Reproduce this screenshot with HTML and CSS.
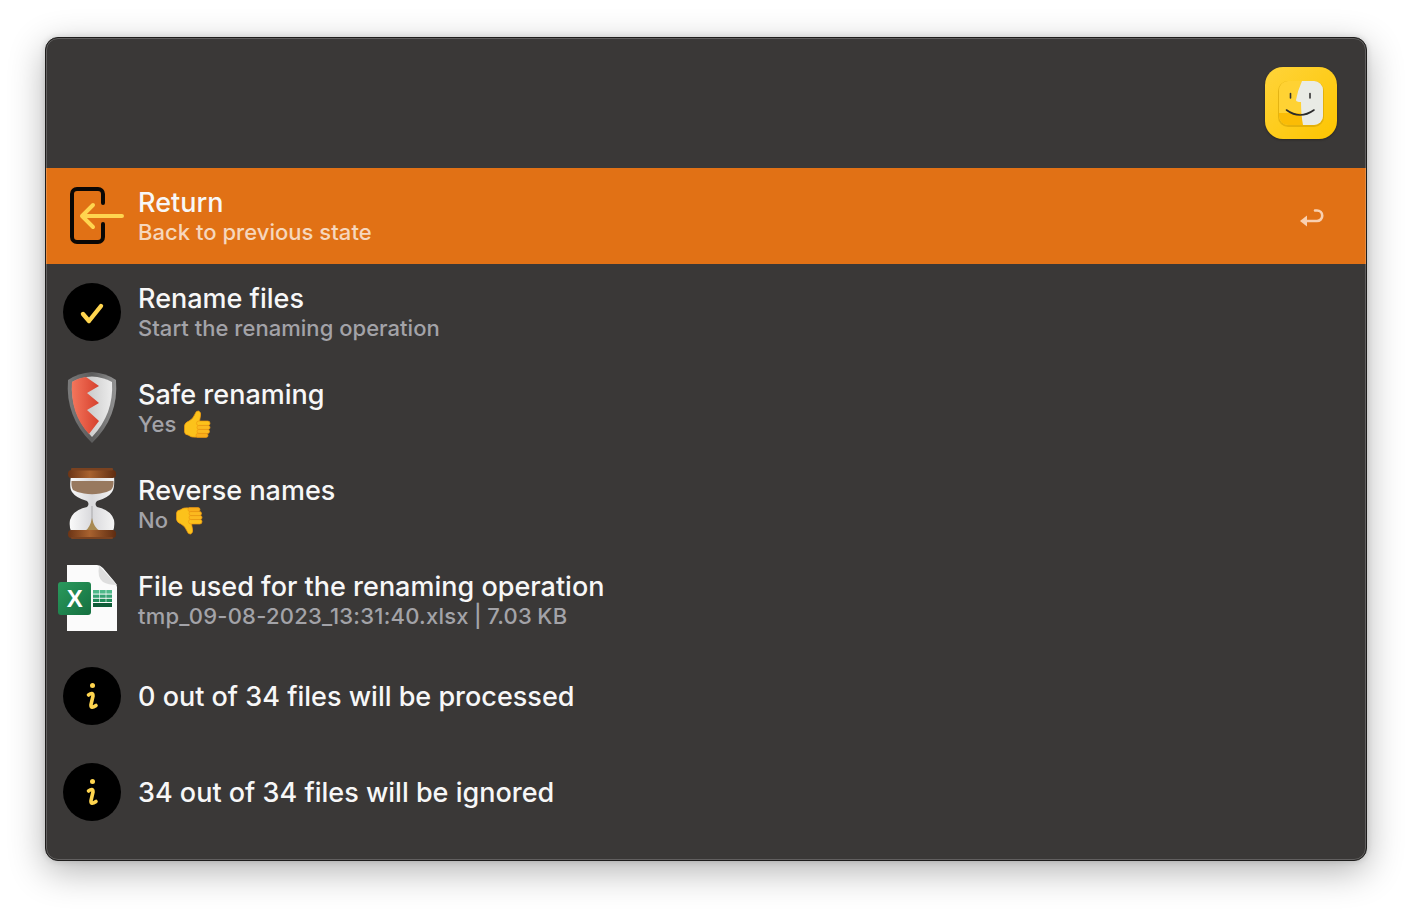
FILE: index.html
```html
<!DOCTYPE html>
<html lang="en">
<head>
  <meta charset="UTF-8" />
  <title>Rename files</title>
  <link rel="stylesheet" href="styles.css">
</head>
<body>
  <svg class="defs" width="0" height="0">
    <defs>
      <symbol id="info" viewBox="0 0 72 72">
        <circle cx="36" cy="36" r="29" fill="#000"/>
        <circle cx="36.5" cy="25.5" r="2.5" fill="#ffd54f"/>
        <path d="M32.5 35 Q37 31.5 37 36 L35 44.5 Q34.5 49.5 40 45.5" fill="none" stroke="#ffd54f" stroke-width="3.6" stroke-linecap="round"/>
      </symbol>
      <symbol id="thumb" viewBox="0 0 28 28">
        <path d="M1.5 15.5 Q2 12.5 6 11 Q10 9 12 4 Q13 0.5 15.5 1 Q18.5 2 17.5 6 L16.5 11 L15 27 Q8 28 5 25 Q2 25 1.5 22 Z" fill="#fcc21b" stroke="#ef9a10" stroke-width="0.7"/>
        <rect x="13.5" y="11" width="13.5" height="4.6" rx="2.3" fill="#fcc21b" stroke="#ef9a10" stroke-width="0.7"/>
        <rect x="14" y="15.4" width="13" height="4.2" rx="2.1" fill="#fbb91f" stroke="#ef9a10" stroke-width="0.7"/>
        <rect x="14" y="19.4" width="12.5" height="4.2" rx="2.1" fill="#fbb91f" stroke="#ef9a10" stroke-width="0.7"/>
        <rect x="13" y="23.4" width="12" height="4" rx="2" fill="#f9ae1a" stroke="#ef9a10" stroke-width="0.7"/>
      </symbol>
    </defs>
  </svg>

  <div class="window">
    <header class="topbar">
      <svg class="finder" width="72" height="72" viewBox="0 0 72 72">
        <defs>
          <linearGradient id="finderBg" x1="0" y1="0" x2="1" y2="1">
            <stop offset="0" stop-color="#ffd43a"/>
            <stop offset="1" stop-color="#fdc500"/>
          </linearGradient>
          <clipPath id="finderClip"><rect x="14" y="14" width="44" height="44" rx="9"/></clipPath>
        </defs>
        <rect width="72" height="72" rx="18" fill="url(#finderBg)"/>
        <rect x="13" y="14" width="46" height="46" rx="10" fill="#c99700" opacity=".5"/>
        <g clip-path="url(#finderClip)">
          <rect x="14" y="14" width="44" height="44" fill="#ffd233"/>
          <rect x="14" y="46" width="24" height="12" fill="#fbbc05"/>
          <path d="M37 14 Q32.5 24 31 33 Q31 35 36 35 Q36 48 38 58 H58 V14 Z" fill="#e9ebe5"/>
        </g>
        <path d="M25.5 26.5 V31 M45 26.5 V31" stroke="#333" stroke-width="1.6" stroke-linecap="round"/>
        <path d="M21.5 43 Q35 53 49 43" fill="none" stroke="#2b2b2b" stroke-width="1.6" stroke-linecap="round"/>
      </svg>
    </header>

    <ul class="list">
      <li class="row selected">
        <svg class="icon" viewBox="0 0 72 72">
          <path d="M47 23 V14 a5 5 0 0 0 -5 -5 H21 a5 5 0 0 0 -5 5 V57 a5 5 0 0 0 5 5 H42 a5 5 0 0 0 5 -5 V44" fill="none" stroke="#0a0705" stroke-width="4" stroke-linecap="round"/>
          <path d="M37 25 L26 36 L37 47 M26 36 H66" fill="none" stroke="#ffd54f" stroke-width="4" stroke-linecap="round" stroke-linejoin="round"/>
        </svg>
        <div class="text">
          <div class="title">Return</div>
          <div class="sub">Back to previous state</div>
        </div>
        <svg class="enter" width="24" height="20" viewBox="0 0 24 20">
          <path d="M0 12 L7 6.5 V17.5 Z" fill="#f9d0b0"/>
          <path d="M6 12 H17 a5 5 0 0 0 0 -10.5 H15" fill="none" stroke="#f9d0b0" stroke-width="2.6" stroke-linecap="round"/>
        </svg>
      </li>

      <li class="row">
        <svg class="icon" viewBox="0 0 72 72">
          <circle cx="36" cy="36" r="29" fill="#000"/>
          <path d="M27 38 L33 45 L45 30" fill="none" stroke="#ffd54f" stroke-width="4.4" stroke-linecap="round" stroke-linejoin="round"/>
        </svg>
        <div class="text">
          <div class="title">Rename files</div>
          <div class="sub">Start the renaming operation</div>
        </div>
      </li>

      <li class="row">
        <svg class="icon" viewBox="0 0 72 72">
          <defs>
            <linearGradient id="shieldEdge" x1="0" y1="0" x2="1" y2="0">
              <stop offset="0" stop-color="#7a7a7a"/>
              <stop offset=".5" stop-color="#5c5c5c"/>
              <stop offset="1" stop-color="#949494"/>
            </linearGradient>
            <linearGradient id="shieldFace" x1="0" y1="0" x2="1" y2="0">
              <stop offset="0" stop-color="#b5b5b5"/>
              <stop offset="1" stop-color="#ececec"/>
            </linearGradient>
            <linearGradient id="shieldRed" x1="0" y1="0" x2="1" y2="0">
              <stop offset="0" stop-color="#f4765c"/>
              <stop offset="1" stop-color="#d6402d"/>
            </linearGradient>
          </defs>
          <path d="M36 0 Q50 1 60 8 Q63 45 36 71 Q9 45 12 8 Q22 1 36 0 Z" fill="url(#shieldEdge)"/>
          <path d="M36 4.5 Q47 5 56 10 Q58 42 36 65 Q14 42 16 10 Q25 5 36 4.5 Z" fill="url(#shieldFace)"/>
          <path d="M30 5 L43 14 L31 21 L43 31 L31 38 L43 49 L33 62 Q14 42 16 10 Q22 6 30 5 Z" fill="url(#shieldRed)"/>
        </svg>
        <div class="text">
          <div class="title">Safe renaming</div>
          <div class="sub">Yes <svg class="emoji" width="28" height="28"><use href="#thumb"/></svg></div>
        </div>
      </li>

      <li class="row">
        <svg class="icon" viewBox="0 0 72 72">
          <defs>
            <linearGradient id="wood" x1="0" y1="0" x2="1" y2="0">
              <stop offset="0" stop-color="#6b3415"/>
              <stop offset=".45" stop-color="#a8622f"/>
              <stop offset="1" stop-color="#5e2c11"/>
            </linearGradient>
            <linearGradient id="glass" x1="0" y1="0" x2="1" y2="0">
              <stop offset="0" stop-color="#fafafa"/>
              <stop offset=".5" stop-color="#d9d9dc"/>
              <stop offset="1" stop-color="#f4f4f4"/>
            </linearGradient>
          </defs>
          <path d="M15 8 H58 Q59 20 56 24 Q52 30 41 33 Q38 36 41 39 Q55 42 58 52 Q59 58 57 63 H15 Q13 58 14 52 Q17 42 31 39 Q34 36 31 33 Q20 30 16 24 Q13 20 15 8 Z" fill="url(#glass)"/>
          <path d="M15.5 13 H57.5 Q58 19 55 22 Q50 25 44 25.5 Q36 27 28 25.5 Q22 25 17 22 Q15 19 15.5 13 Z" fill="#98795f"/>
          <path d="M36 38 V56" stroke="#a9a9ab" stroke-width="1"/>
          <path d="M29 63 Q34 60 36 50 Q38 60 44 63 Z" fill="#a98a52"/>
          <rect x="12" y="2" width="48" height="8" rx="3.5" fill="url(#wood)"/>
          <rect x="15" y="0" width="42" height="2.5" rx="1" fill="#7a4220"/>
          <rect x="12" y="62" width="48" height="8" rx="3.5" fill="url(#wood)"/>
          <rect x="15" y="69" width="42" height="2" rx="1" fill="#7a4220"/>
        </svg>
        <div class="text">
          <div class="title">Reverse names</div>
          <div class="sub">No <svg class="emoji down" width="28" height="28"><use href="#thumb"/></svg></div>
        </div>
      </li>

      <li class="row">
        <svg class="icon" viewBox="0 0 72 72">
          <defs>
            <linearGradient id="xlsGreen" x1="0" y1="0" x2="1" y2="1">
              <stop offset="0" stop-color="#2a9a5d"/>
              <stop offset="1" stop-color="#157040"/>
            </linearGradient>
          </defs>
          <path d="M11 1 H41 Q44 1 47 4 L58 17 Q61 20 61 23 V67 H11 Z" fill="#fbfbfb"/>
          <path d="M43 1.5 Q41 14 47 18 Q52 21 61 21 Z" fill="#dedede"/>
          <rect x="37" y="26" width="19" height="3.6" fill="#4fb98a"/>
          <rect x="37" y="30.6" width="19" height="3.2" fill="#35a173"/>
          <rect x="37" y="34.8" width="19" height="3.2" fill="#1f8a58"/>
          <rect x="37" y="39" width="19" height="4" fill="#0f5c38"/>
          <path d="M43.5 26 V39 M50 26 V39" stroke="#fff" stroke-width=".6"/>
          <rect x="2" y="18" width="33" height="33" rx="3" fill="url(#xlsGreen)"/>
          <text class="xls" x="18.7" y="43" text-anchor="middle">X</text>
        </svg>
        <div class="text">
          <div class="title">File used for the renaming operation</div>
          <div class="sub file">tmp_09-08-2023_13:31:40.xlsx | 7.03 KB</div>
        </div>
      </li>

      <li class="row">
        <svg class="icon"><use href="#info"/></svg>
        <div class="text">
          <div class="title">0 out of 34 files will be processed</div>
        </div>
      </li>

      <li class="row">
        <svg class="icon"><use href="#info"/></svg>
        <div class="text">
          <div class="title">34 out of 34 files will be ignored</div>
        </div>
      </li>
    </ul>
  </div>
</body>
</html>
```

FILE: styles.css
```css
html, body {
  height: 100%;
}

body {
  margin: 0;
  padding: 37px 45px 0;
  box-sizing: border-box;
  background: #fff;
  font-family: Inter, "Liberation Sans", sans-serif;
  overflow: hidden;
}

.defs {
  display: block;
  position: absolute;
}

.window {
  position: relative;
  width: 1322px;
  height: 824px;
  box-sizing: border-box;
  border: 1px solid #1e1d1c;
  border-radius: 13px;
  background: #3a3837;
  box-shadow: 0 10px 36px rgba(0, 0, 0, 0.3), 0 0 6px rgba(0, 0, 0, 0.15);
  overflow: hidden;
}

/* light rim on top of the rows */
.window::after {
  content: "";
  position: absolute;
  inset: 0;
  border: 1px solid rgba(255, 255, 255, 0.2);
  border-radius: 12px;
  pointer-events: none;
}

.topbar {
  height: 130px;
  display: flex;
  justify-content: flex-end;
  align-items: flex-start;
  padding: 29px 29px 0 0;
  box-sizing: border-box;
}

.finder {
  display: block;
  filter: drop-shadow(0 1px 1px rgba(0, 0, 0, 0.3));
}

.list {
  list-style: none;
  margin: 0;
  padding: 0;
}

.row {
  height: 96px;
  display: flex;
  align-items: center;
  gap: 10px;
  padding-left: 10px;
}

.row.selected {
  background: #e17115;
}

.icon {
  width: 72px;
  height: 72px;
  flex: none;
  display: block;
}

.text {
  flex: 1;
  min-width: 0;
  padding-top: 1px;
}

.title {
  font-size: 27px;
  font-weight: 450;
  line-height: 32px;
  color: #f7f7f7;
}

.sub {
  display: flex;
  align-items: center;
  gap: 7px;
  height: 27px;
  font-size: 22px;
  font-weight: 450;
  line-height: 27px;
  letter-spacing: 0.03px;
  color: #a3a3a8;
}

.sub.file {
  letter-spacing: 0.23px;
  word-spacing: -0.8px;
}

.selected .sub {
  color: rgba(255, 255, 255, 0.72);
}

.emoji {
  display: block;
  flex: none;
  margin-top: -2px;
}

.emoji.down {
  margin-top: 0;
  transform: rotate(180deg) scaleX(-1);
}

.enter {
  flex: none;
  margin: 5px 42px 0 0;
}

.xls {
  font-family: "Liberation Sans", sans-serif;
  font-size: 24px;
  font-weight: 700;
  fill: #fff;
}
```
